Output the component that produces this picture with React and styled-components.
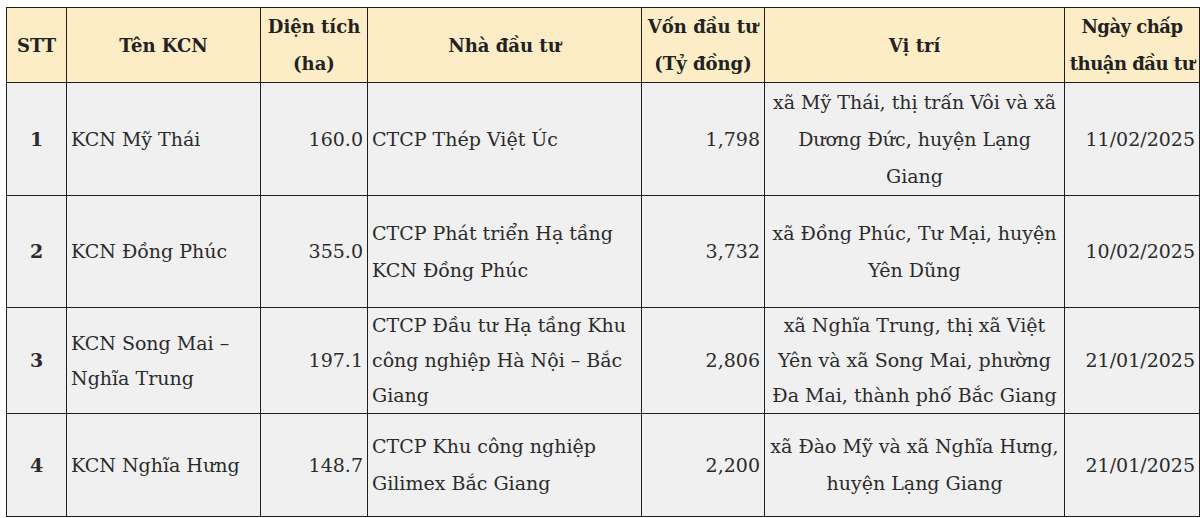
import React from "react";
import styled, { createGlobalStyle } from "styled-components";

const Global = createGlobalStyle`
  html, body {
    margin: 0;
    padding: 0;
    background: #ffffff;
  }
  body {
    font-family: "DejaVu Serif", "Liberation Serif", serif;
    color: #2b2b2b;
  }
`;

const Page = styled.div`
  padding: 7px 0 0 6px;
  width: 1200px;
  height: 518px;
  box-sizing: border-box;
  overflow: hidden;
`;

const Table = styled.table`
  border-collapse: collapse;
  table-layout: fixed;
  width: 1193px;
  font-size: 19px;
  line-height: 37px;

  td,
  th {
    border: 1px solid #1e1e1e;
    white-space: nowrap;
    overflow: visible;
    vertical-align: middle;
  }
`;

const HeadRow = styled.tr`
  height: 75px;
  background: #fdedc6;
`;

const Th = styled.th`
  font-weight: 700;
  font-size: 18px;
  letter-spacing: ${(p) => (p.$tight ? "-0.5px" : "0")};
  text-align: center;
  padding: 0;
  color: #222;
`;

const Row = styled.tr`
  height: ${(p) => p.$h}px;
  line-height: ${(p) => p.$lh}px;
  background: #f0f0f0;
`;

const Td = styled.td`
  padding: 0 ${(p) => (p.$align === "center" ? 0 : 4)}px;
  text-align: ${(p) => p.$align || "left"};
  font-weight: ${(p) => (p.$bold ? 700 : 400)};
`;

const cols = [60, 194, 107, 274, 123, 300, 135];

const rows = [
  {
    h: 113,
    lh: 37,
    stt: "1",
    name: ["KCN Mỹ Thái"],
    area: "160.0",
    investor: ["CTCP Thép Việt Úc"],
    capital: "1,798",
    place: ["xã Mỹ Thái, thị trấn Vôi và xã", "Dương Đức, huyện Lạng", "Giang"],
    date: "11/02/2025",
  },
  {
    h: 112,
    lh: 37,
    stt: "2",
    name: ["KCN Đồng Phúc"],
    area: "355.0",
    investor: ["CTCP Phát triển Hạ tầng", "KCN Đồng Phúc"],
    capital: "3,732",
    place: ["xã Đồng Phúc, Tư Mại, huyện", "Yên Dũng"],
    date: "10/02/2025",
  },
  {
    h: 105,
    lh: 35,
    stt: "3",
    name: ["KCN Song Mai –", "Nghĩa Trung"],
    area: "197.1",
    investor: ["CTCP Đầu tư Hạ tầng Khu", "công nghiệp Hà Nội – Bắc", "Giang"],
    capital: "2,806",
    place: ["xã Nghĩa Trung, thị xã Việt", "Yên và xã Song Mai, phường", "Đa Mai, thành phố Bắc Giang"],
    date: "21/01/2025",
  },
  {
    h: 103,
    lh: 37,
    stt: "4",
    name: ["KCN Nghĩa Hưng"],
    area: "148.7",
    investor: ["CTCP Khu công nghiệp", "Gilimex Bắc Giang"],
    capital: "2,200",
    place: ["xã Đào Mỹ và xã Nghĩa Hưng,", "huyện Lạng Giang"],
    date: "21/01/2025",
  },
];

const Lines = ({ items }) =>
  items.map((t, i) => (
    <React.Fragment key={i}>
      {i > 0 && <br />}
      {t}
    </React.Fragment>
  ));

export default function App() {
  return (
    <Page>
      <Global />
      <Table>
        <colgroup>
          {cols.map((w, i) => (
            <col key={i} style={{ width: w }} />
          ))}
        </colgroup>
        <thead>
          <HeadRow>
            <Th>STT</Th>
            <Th>Tên KCN</Th>
            <Th>
              Diện tích
              <br />
              (ha)
            </Th>
            <Th>Nhà đầu tư</Th>
            <Th>
              Vốn đầu tư
              <br />
              (Tỷ đồng)
            </Th>
            <Th>Vị trí</Th>
            <Th $tight>
              Ngày chấp
              <br />
              thuận đầu tư
            </Th>
          </HeadRow>
        </thead>
        <tbody>
          {rows.map((r) => (
            <Row key={r.stt} $h={r.h} $lh={r.lh}>
              <Td $align="center" $bold>
                {r.stt}
              </Td>
              <Td>
                <Lines items={r.name} />
              </Td>
              <Td $align="right">{r.area}</Td>
              <Td>
                <Lines items={r.investor} />
              </Td>
              <Td $align="right">{r.capital}</Td>
              <Td $align="center">
                <Lines items={r.place} />
              </Td>
              <Td $align="right">{r.date}</Td>
            </Row>
          ))}
        </tbody>
      </Table>
    </Page>
  );
}
